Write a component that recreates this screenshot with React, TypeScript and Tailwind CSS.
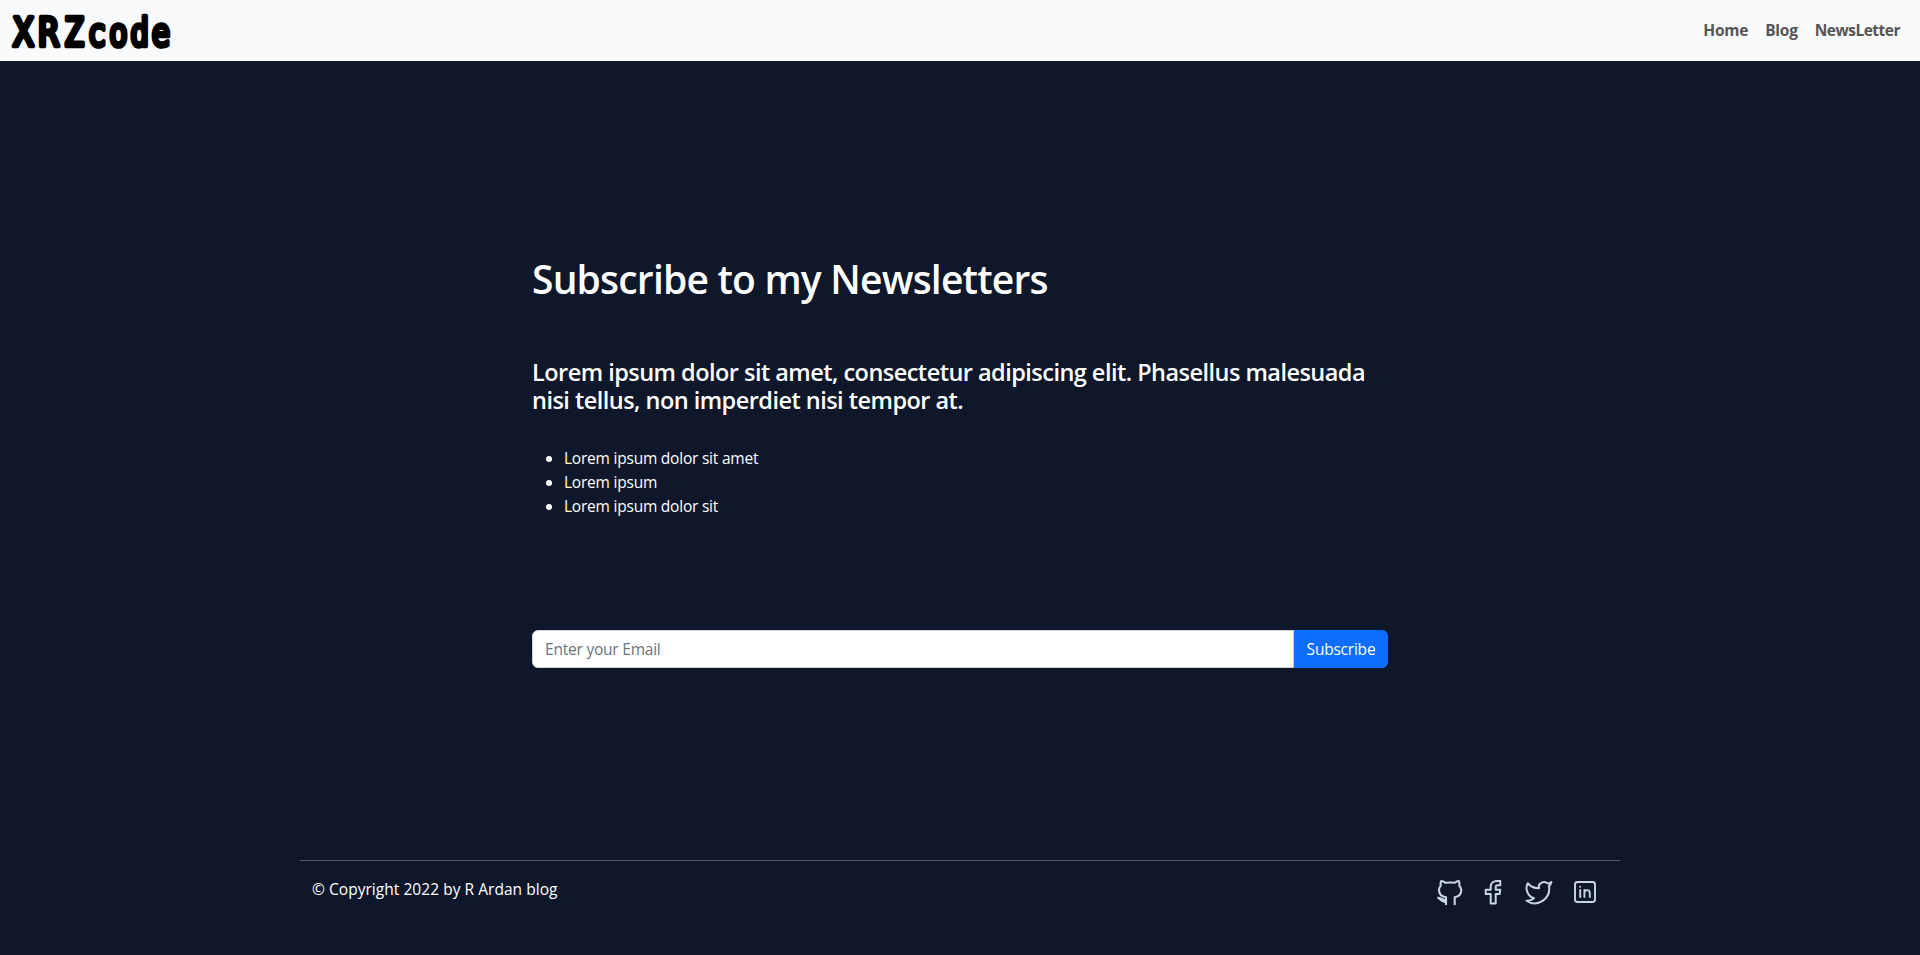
const items = ["Lorem ipsum dolor sit amet", "Lorem ipsum", "Lorem ipsum dolor sit"];

function Logo() {
  return (
    <svg width="176" height="61" viewBox="0 0 176 61" aria-label="XRZcode">
      <g
        textAnchor="middle"
        fontFamily="'DejaVu Sans Mono',monospace"
        fontSize="39"
        fill="#000"
        stroke="#000"
        strokeWidth="4.6"
        strokeLinejoin="round"
      >
        <text transform="scale(.86 1)" x="27.300 56.400 86" y="45.700">XRZ</text>
        <text transform="scale(.8 1)" x="121.200 148 174.600 201.200" y="45.700">code</text>
      </g>
    </svg>
  );
}

const line = {
  fill: "none",
  stroke: "currentColor",
  strokeLinecap: "round",
  strokeLinejoin: "round",
} as const;

function GithubIcon() {
  return (
    <svg className="mt-0.5" width="28" height="28" viewBox="0 0 28 28" {...line} strokeWidth="2.1" strokeLinecap="butt">
      <path d="M10 26V18.200C5.500 17.500 3 15.200 3 11c0-1.700.6-3.200 1.700-4.300C4.300 5 4.500 3.400 5.200 2c1.600.1 2.900.8 4 1.800 3.200-.4 6.400-.4 9.600 0 1.100-1 2.400-1.700 4-1.800.7 1.400.9 3 .5 4.700 1.200 1.100 2 2.600 2 4.300 0 4.200-2.200 6.500-6.600 7.200V26" />
      <path d="M10 21.200c-3 0-4-2-7.800-2.500 2.200 1 3 4.600 7.800 4.400z" fill="currentColor" />
    </svg>
  );
}

function FacebookIcon() {
  return (
    <svg className="mt-0.5 ml-5" width="18" height="28" viewBox="0 0 18 28" {...line} strokeWidth="2">
      <path d="M1.700 10.700V15h5v9.400h5V15h3.900l.7-4.300h-4.600V8.200c0-1.200.8-1.900 2-1.900h2.600V2h-3.300C9.300 2 6.700 4.200 6.700 7.600v3.100z" />
    </svg>
  );
}

function TwitterIcon() {
  return (
    <svg className="ml-[22px]" width="30" height="30" viewBox="0 0 24 24" {...line} strokeWidth="1.600">
      <path d="M22 4s-.7 2.100-2 3.400c1.600 10-9.400 17.300-18 11.600 2.200.1 4.400-.6 6-2C3 15.500.5 9.600 3 5c2.200 2.600 5.600 4.100 9 4-.9-4.200 4-6.600 7-3.800 1.100 0 3-1.200 3-1.200z" />
    </svg>
  );
}

function LinkedinIcon() {
  return (
    <svg className="mt-[3px] ml-[19px]" width="24" height="24" viewBox="0 0 24 24" {...line} strokeWidth="1.900">
      <rect x="2" y="2" width="20" height="20" rx="2.500" />
      <path d="M7.200 10v7M7.200 6.700v.1M11.400 10v7M11.400 13c0-3.800 5.400-3.800 5.400 0v4" />
    </svg>
  );
}

export default function App() {
  return (
    <div className="flex min-h-[955px] flex-col bg-[#0f172a] font-['Open_Sans','Noto_Sans',sans-serif] text-[15.5px] text-white">
      <header className="flex h-[61px] items-center justify-between bg-slate-50 pr-5">
        <Logo />
        <nav className="flex gap-[17px] pb-px leading-6 font-bold tracking-[-0.25px] text-[#555]">
          <a>Home</a>
          <a>Blog</a>
          <a className="tracking-[-0.5px]">NewsLetter</a>
        </nav>
      </header>
      <main className="mx-auto w-[856px] pt-[194px]">
        <h1 className="text-[39px] leading-12 font-semibold tracking-[-0.8px]">Subscribe to my Newsletters</h1>
        <h4 className="mt-[55px] text-[23.5px] leading-7 font-semibold tracking-[-0.53px]">
          Lorem ipsum dolor sit amet, consectetur adipiscing elit. Phasellus malesuada nisi tellus, non imperdiet nisi tempor at.
        </h4>
        <ul className="mt-8 list-disc pl-8 leading-6 tracking-[-0.22px]">
          {items.map((t) => (
            <li key={t}>{t}</li>
          ))}
        </ul>
        <form className="mt-28 flex h-[38px] tracking-[-0.22px]">
          <input
            placeholder="Enter your Email"
            className="min-w-0 flex-1 rounded-l-md border border-[#ced4da] bg-white px-3 pt-0.5 tracking-[-0.22px] placeholder:text-[#6c757d]"
          />
          <button type="button" className="w-[94px] rounded-r-md bg-[#0d6efd] pt-0.5 tracking-[-0.22px]">Subscribe</button>
        </form>
      </main>
      <footer className="mx-auto mt-auto flex h-[95px] w-[1320px] justify-between border-t border-[#525966] pt-4 pr-[23px] pl-3">
        <p className="leading-6 tracking-[0.04px]">© Copyright 2022 by R Ardan blog</p>
        <div className="flex items-start text-slate-300">
          <GithubIcon />
          <FacebookIcon />
          <TwitterIcon />
          <LinkedinIcon />
        </div>
      </footer>
    </div>
  );
}
